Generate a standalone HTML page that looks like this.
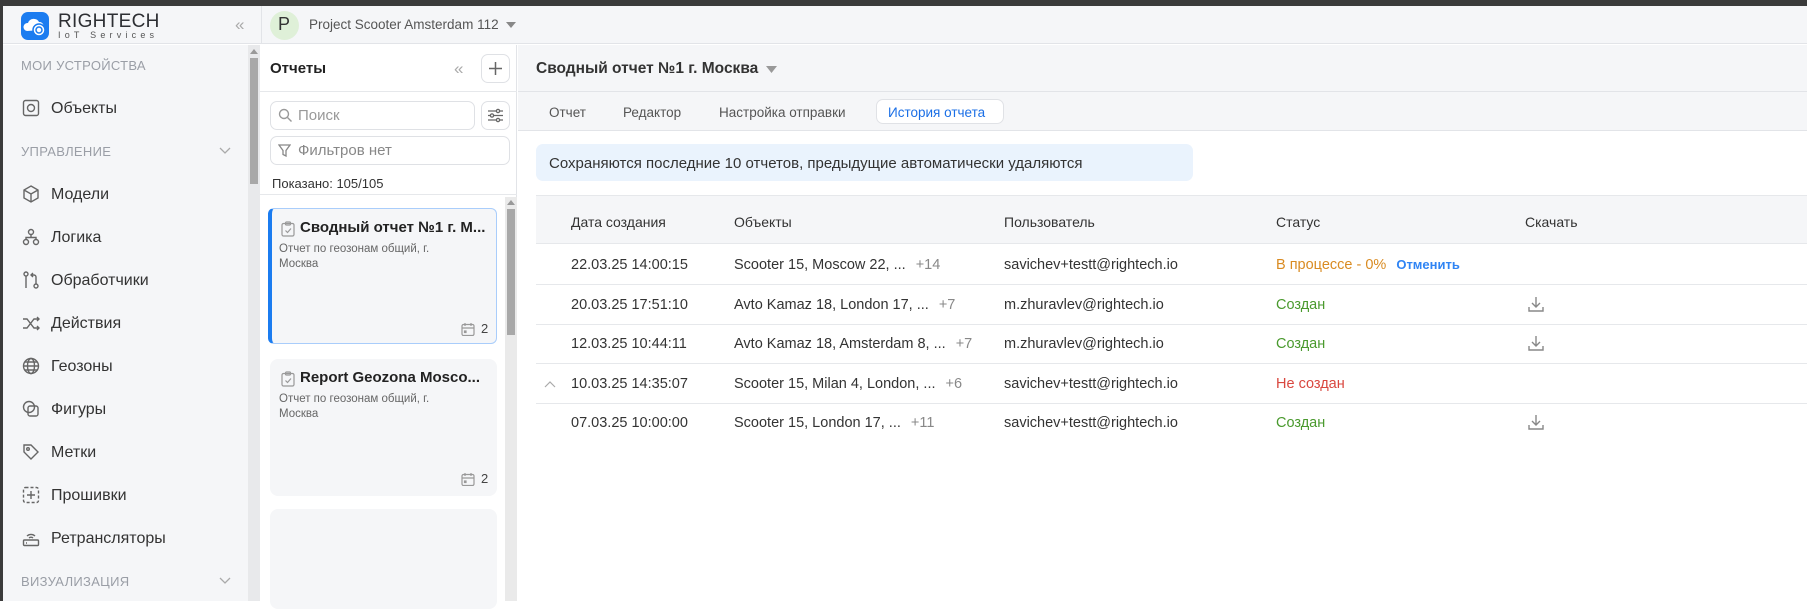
<!DOCTYPE html>
<html><head><meta charset="utf-8"><style>
*{box-sizing:border-box;margin:0;padding:0}
body{width:1807px;height:601px;overflow:hidden;background:#fff;font-family:"Liberation Sans","Noto Sans CJK SC",sans-serif;color:#2b2b2b;position:relative}
.a{position:absolute}
.t{position:absolute;white-space:nowrap}
.nav{font-size:16px;color:#333}
.sec{font-size:13px;color:#9a9ea6;letter-spacing:.3px}
svg{position:absolute}
.th{font-size:14px;color:#333;top:214px}
.td{font-size:14.5px;color:#333}
.hl{position:absolute;left:536px;right:0;height:1px;background:#e6e8eb}
</style></head><body>
<div class="a" style="left:0;top:0;width:1807px;height:6px;background:#3b3b3b"></div>
<div class="a" style="left:0;top:0;width:3px;height:601px;background:#3b3b3b"></div>
<!-- header -->
<div class="a" style="left:3px;top:6px;width:1804px;height:38px;background:#f5f6f8;border-bottom:1px solid #e2e4e8"></div>
<div class="a" style="left:21px;top:12px;width:28px;height:28px;border-radius:7px;background:#1b7cf0"></div>
<svg style="left:21px;top:12px" width="28" height="28"><path d="M6 19a4 4 0 0 1 1-8 6 6 0 0 1 11-1 4.5 4.5 0 0 1 3 8" fill="#fff"/><circle cx="18" cy="18" r="6" fill="#fff" stroke="#1b7cf0" stroke-width="1.5"/><circle cx="18" cy="18" r="3" fill="none" stroke="#1b7cf0" stroke-width="1.5"/></svg>
<div class="t" style="left:58px;top:11px;font-size:19px;color:#2d2f33;letter-spacing:.3px">RIGHTECH</div>
<div class="t" style="left:58px;top:30px;font-size:9px;color:#555;letter-spacing:4.2px">IoT Services</div>
<div class="t" style="left:235px;top:15px;font-size:17px;color:#aaa">«</div>
<div class="a" style="left:261px;top:6px;width:1px;height:38px;background:#e2e4e8"></div>
<div class="a" style="left:270px;top:11px;width:29px;height:29px;border-radius:50%;background:#dff0d8"></div>
<div class="t" style="left:278px;top:14px;font-size:18px;color:#333">P</div>
<div class="t" style="left:309px;top:17px;font-size:13.5px;color:#555">Project Scooter Amsterdam 112</div>
<svg style="left:506px;top:22px" width="10" height="6"><path d="M0 0h10L5 6z" fill="#888"/></svg>
<!-- sidebar -->
<div class="a" style="left:3px;top:45px;width:245px;height:556px;background:#f5f6f8"></div>
<div class="a" style="left:248px;top:45px;width:12px;height:556px;background:#e8e9eb"></div>
<div class="a" style="left:250px;top:58px;width:8px;height:126px;background:#a8a8a8"></div>
<svg style="left:250px;top:48px" width="8" height="6"><path d="M0 6L4 1 8 6z" fill="#999"/></svg>
<div class="t sec" style="left:21px;top:58px">МОИ УСТРОЙСТВА</div>
<div class="t sec" style="left:21px;top:144px">УПРАВЛЕНИЕ</div>
<div class="t sec" style="left:21px;top:574px">ВИЗУАЛИЗАЦИЯ</div>
<svg style="left:219px;top:147px" width="12" height="8"><path d="M1 1l5 5 5-5" fill="none" stroke="#aaa" stroke-width="1.3"/></svg>
<svg style="left:219px;top:577px" width="12" height="8"><path d="M1 1l5 5 5-5" fill="none" stroke="#aaa" stroke-width="1.3"/></svg>
<div class="t nav" style="left:51px;top:100px">Объекты</div>
<div class="t nav" style="left:51px;top:186px">Модели</div>
<div class="t nav" style="left:51px;top:229px">Логика</div>
<div class="t nav" style="left:51px;top:272px">Обработчики</div>
<div class="t nav" style="left:51px;top:315px">Действия</div>
<div class="t nav" style="left:51px;top:358px">Геозоны</div>
<div class="t nav" style="left:51px;top:401px">Фигуры</div>
<div class="t nav" style="left:51px;top:444px">Метки</div>
<div class="t nav" style="left:51px;top:487px">Прошивки</div>
<div class="t nav" style="left:51px;top:530px">Ретрансляторы</div>
<svg style="left:22px;top:99px" width="18" height="18" fill="none" stroke="#666" stroke-width="1.4"><rect x="1.5" y="1.5" width="15" height="15" rx="2"/><circle cx="9" cy="9" r="3.5"/></svg>
<svg style="left:22px;top:185px" width="18" height="18" fill="none" stroke="#666" stroke-width="1.4"><path d="M9 1l7 4v8l-7 4-7-4V5zM2 5l7 4 7-4M9 9v8"/></svg>
<svg style="left:22px;top:228px" width="18" height="18" fill="none" stroke="#666" stroke-width="1.4"><circle cx="9" cy="4" r="2.5"/><circle cx="4" cy="14" r="2.5"/><circle cx="14" cy="14" r="2.5"/><path d="M9 6.5v3M4 11.5V9.5h10v2"/></svg>
<svg style="left:22px;top:271px" width="18" height="18" fill="none" stroke="#666" stroke-width="1.4"><circle cx="4" cy="3" r="2"/><circle cx="14" cy="15" r="2"/><path d="M4 5v12M14 13V6a2 2 0 0 0-2-2H9M11 2L9 4l2 2"/></svg>
<svg style="left:22px;top:314px" width="18" height="18" fill="none" stroke="#666" stroke-width="1.4"><path d="M1 5h4l7 9h5M1 14h4l7-9h5M15 3l2 2-2 2M15 12l2 2-2 2"/></svg>
<svg style="left:22px;top:357px" width="18" height="18" fill="none" stroke="#666" stroke-width="1.4"><circle cx="9" cy="9" r="7.5"/><ellipse cx="9" cy="9" rx="3.5" ry="7.5"/><path d="M1.5 9h15M2.5 5h13M2.5 13h13"/></svg>
<svg style="left:22px;top:400px" width="18" height="18" fill="none" stroke="#666" stroke-width="1.4"><circle cx="7" cy="7" r="5.5"/><rect x="6" y="6" width="10" height="10" rx="2"/></svg>
<svg style="left:22px;top:443px" width="18" height="18" fill="none" stroke="#666" stroke-width="1.4"><path d="M2 2h7l7 7-7 7-7-7z"/><circle cx="6" cy="6" r="1.3"/></svg>
<svg style="left:22px;top:486px" width="18" height="18" fill="none" stroke="#666" stroke-width="1.4" stroke-dasharray="3 2"><rect x="1.5" y="1.5" width="15" height="15" rx="2"/><path d="M9 5v8M5 9h8" stroke-dasharray="none"/></svg>
<svg style="left:22px;top:529px" width="18" height="18" fill="none" stroke="#666" stroke-width="1.4"><rect x="1.5" y="11" width="15" height="5.5" rx="1"/><path d="M4 14h1M5 7a6 6 0 0 1 8 0M7 9a3 3 0 0 1 4 0"/></svg>
<!-- reports panel -->
<div class="a" style="left:260px;top:45px;width:257px;height:556px;background:#fff;border-right:1px solid #e2e4e8"></div>
<div class="t" style="left:270px;top:60px;font-size:15px;font-weight:bold;color:#222">Отчеты</div>
<div class="t" style="left:454px;top:59px;font-size:17px;color:#aaa">«</div>
<div class="a" style="left:481px;top:54px;width:29px;height:29px;border:1px solid #dfe1e5;border-radius:7px"></div>
<svg style="left:487px;top:60px" width="17" height="17"><path d="M8.5 2v13M2 8.5h13" stroke="#666" stroke-width="1.5"/></svg>
<div class="a" style="left:260px;top:91px;width:257px;height:1px;background:#e6e8eb"></div>
<div class="a" style="left:270px;top:101px;width:205px;height:29px;border:1px solid #dfe1e5;border-radius:7px"></div>
<svg style="left:278px;top:108px" width="15" height="15" fill="none" stroke="#999" stroke-width="1.4"><circle cx="6" cy="6" r="4.5"/><path d="M9.5 9.5l4 4"/></svg>
<div class="t" style="left:298px;top:107px;font-size:15px;color:#999">Поиск</div>
<div class="a" style="left:481px;top:101px;width:29px;height:29px;border:1px solid #dfe1e5;border-radius:7px"></div>
<svg style="left:487px;top:108px" width="17" height="15" fill="none" stroke="#666" stroke-width="1.3"><path d="M1 3h15M1 7.5h15M1 12h15"/><circle cx="11" cy="3" r="1.6" fill="#fff"/><circle cx="5" cy="7.5" r="1.6" fill="#fff"/><circle cx="11" cy="12" r="1.6" fill="#fff"/></svg>
<div class="a" style="left:270px;top:136px;width:240px;height:29px;border:1px solid #dfe1e5;border-radius:7px"></div>
<svg style="left:278px;top:144px" width="13" height="13" fill="none" stroke="#888" stroke-width="1.3"><path d="M1 1h11L8 6.5V12L5 10.5V6.5z"/></svg>
<div class="t" style="left:298px;top:142px;font-size:15px;color:#888">Фильтров нет</div>
<div class="t" style="left:272px;top:176px;font-size:13px;color:#333">Показано: 105/105</div>
<div class="a" style="left:260px;top:194px;width:257px;height:1px;background:#e6e8eb"></div>
<div class="a" style="left:505px;top:197px;width:12px;height:404px;background:#eaeaea"></div>
<div class="a" style="left:507px;top:209px;width:8px;height:126px;background:#a8a8a8"></div>
<svg style="left:507px;top:199px" width="8" height="6"><path d="M0 6L4 1 8 6z" fill="#999"/></svg>
<!-- cards -->
<div class="a" style="left:268px;top:208px;width:229px;height:136px;background:#f5f6f8;border:1.5px solid #a9cdfb;border-left:4px solid #1b7cf0;border-radius:6px"></div>
<svg style="left:281px;top:221px" width="14" height="16" fill="none" stroke="#999" stroke-width="1.2"><rect x="1" y="2.5" width="12" height="12.5" rx="1.5"/><rect x="4.5" y="1" width="5" height="3" rx="1"/><path d="M4.5 9.5l2 2 3.5-4"/></svg>
<div class="t" style="left:300px;top:219px;font-size:15px;font-weight:bold;color:#222">Сводный отчет №1 г. М...</div>
<div class="t" style="left:279px;top:242px;font-size:11.5px;color:#666;line-height:15px">Отчет по геозонам общий, г.<br>Москва</div>
<svg style="left:461px;top:322px" width="14" height="14" fill="none" stroke="#999" stroke-width="1.2"><rect x="1" y="2.5" width="12" height="11" rx="1.5"/><path d="M1 6h12M4 1v3M10 1v3"/><rect x="3.5" y="9" width="1.5" height="1.5" fill="#999"/></svg>
<div class="t" style="left:481px;top:321px;font-size:13px;color:#444">2</div>
<div class="a" style="left:270px;top:359px;width:227px;height:137px;background:#f5f6f8;border-radius:8px"></div>
<svg style="left:281px;top:371px" width="14" height="16" fill="none" stroke="#999" stroke-width="1.2"><rect x="1" y="2.5" width="12" height="12.5" rx="1.5"/><rect x="4.5" y="1" width="5" height="3" rx="1"/><path d="M4.5 9.5l2 2 3.5-4"/></svg>
<div class="t" style="left:300px;top:369px;font-size:15px;font-weight:bold;color:#222">Report Geozona Mosco...</div>
<div class="t" style="left:279px;top:392px;font-size:11.5px;color:#666;line-height:15px">Отчет по геозонам общий, г.<br>Москва</div>
<svg style="left:461px;top:472px" width="14" height="14" fill="none" stroke="#999" stroke-width="1.2"><rect x="1" y="2.5" width="12" height="11" rx="1.5"/><path d="M1 6h12M4 1v3M10 1v3"/><rect x="3.5" y="9" width="1.5" height="1.5" fill="#999"/></svg>
<div class="t" style="left:481px;top:471px;font-size:13px;color:#444">2</div>
<div class="a" style="left:270px;top:509px;width:227px;height:100px;background:#f5f6f8;border-radius:8px"></div>
<!-- main -->
<div class="a" style="left:518px;top:45px;width:1289px;height:85px;background:#f5f6f8"></div>
<div class="t" style="left:536px;top:60px;font-size:15.5px;font-weight:bold;color:#333">Сводный отчет №1 г. Москва</div>
<svg style="left:766px;top:66px" width="11" height="7"><path d="M0 0h11L5.5 7z" fill="#999"/></svg>
<div class="a" style="left:518px;top:91px;width:1289px;height:1px;background:#e2e4e8"></div>
<div class="a" style="left:518px;top:130px;width:1289px;height:1px;background:#e2e4e8"></div>
<div class="t" style="left:549px;top:105px;font-size:13.5px;color:#555">Отчет</div>
<div class="t" style="left:623px;top:105px;font-size:13.5px;color:#555">Редактор</div>
<div class="t" style="left:719px;top:105px;font-size:13.5px;color:#555">Настройка отправки</div>
<div class="a" style="left:876px;top:99px;width:128px;height:25px;background:#fff;border:1px solid #e0e2e6;border-radius:7px"></div>
<div class="t" style="left:888px;top:105px;font-size:13.5px;color:#1b6fe6">История отчета</div>
<div class="a" style="left:536px;top:144px;width:657px;height:37px;background:#eaf3fd;border-radius:7px"></div>
<div class="t" style="left:549px;top:155px;font-size:15px;color:#333">Сохраняются последние 10 отчетов, предыдущие автоматически удаляются</div>
<div class="a" style="left:536px;top:195px;width:1271px;height:49px;background:#f5f6f8;border-top:1px solid #e6e8eb;border-bottom:1px solid #e6e8eb"></div>
<div class="t th" style="left:571px">Дата создания</div>
<div class="t th" style="left:734px">Объекты</div>
<div class="t th" style="left:1004px">Пользователь</div>
<div class="t th" style="left:1276px">Статус</div>
<div class="t th" style="left:1525px">Скачать</div>
<div class="hl" style="top:284px"></div>
<div class="hl" style="top:324px"></div>
<div class="hl" style="top:363px"></div>
<div class="hl" style="top:403px"></div>
<div class="t td" style="left:571px;top:257px">22.03.25 14:00:15</div>
<div class="t td" style="left:734px;top:257px">Scooter 15, Moscow 22, ... <span style="color:#888;margin-left:6px">+14</span></div>
<div class="t td" style="left:1004px;top:257px">savichev+testt@rightech.io</div>
<div class="t td" style="left:1276px;top:257px;color:#d98b22">В процессе - 0% <span style="color:#2f84f4;font-weight:bold;font-size:13px;margin-left:6px">Отменить</span></div>
<div class="t td" style="left:571px;top:297px">20.03.25 17:51:10</div>
<div class="t td" style="left:734px;top:297px">Avto Kamaz 18, London 17, ... <span style="color:#888;margin-left:6px">+7</span></div>
<div class="t td" style="left:1004px;top:297px">m.zhuravlev@rightech.io</div>
<div class="t td" style="left:1276px;top:297px;color:#4a9a2e">Создан</div>
<div class="t td" style="left:571px;top:336px">12.03.25 10:44:11</div>
<div class="t td" style="left:734px;top:336px">Avto Kamaz 18, Amsterdam 8, ... <span style="color:#888;margin-left:6px">+7</span></div>
<div class="t td" style="left:1004px;top:336px">m.zhuravlev@rightech.io</div>
<div class="t td" style="left:1276px;top:336px;color:#4a9a2e">Создан</div>
<svg style="left:544px;top:380px" width="12" height="8"><path d="M1 7l5-5 5 5" fill="none" stroke="#aaa" stroke-width="1.2"/></svg>
<div class="t td" style="left:571px;top:376px">10.03.25 14:35:07</div>
<div class="t td" style="left:734px;top:376px">Scooter 15, Milan 4, London, ... <span style="color:#888;margin-left:6px">+6</span></div>
<div class="t td" style="left:1004px;top:376px">savichev+testt@rightech.io</div>
<div class="t td" style="left:1276px;top:376px;color:#d9473f">Не создан</div>
<div class="t td" style="left:571px;top:415px">07.03.25 10:00:00</div>
<div class="t td" style="left:734px;top:415px">Scooter 15, London 17, ... <span style="color:#888;margin-left:6px">+11</span></div>
<div class="t td" style="left:1004px;top:415px">savichev+testt@rightech.io</div>
<div class="t td" style="left:1276px;top:415px;color:#4a9a2e">Создан</div>
<svg style="left:1527px;top:295px" width="18" height="18" fill="none" stroke="#888" stroke-width="1.4"><path d="M9 2v10M5 8l4 4 4-4M2 12v4h14v-4"/></svg>
<svg style="left:1527px;top:334px" width="18" height="18" fill="none" stroke="#888" stroke-width="1.4"><path d="M9 2v10M5 8l4 4 4-4M2 12v4h14v-4"/></svg>
<svg style="left:1527px;top:413px" width="18" height="18" fill="none" stroke="#888" stroke-width="1.4"><path d="M9 2v10M5 8l4 4 4-4M2 12v4h14v-4"/></svg>
</body></html>
